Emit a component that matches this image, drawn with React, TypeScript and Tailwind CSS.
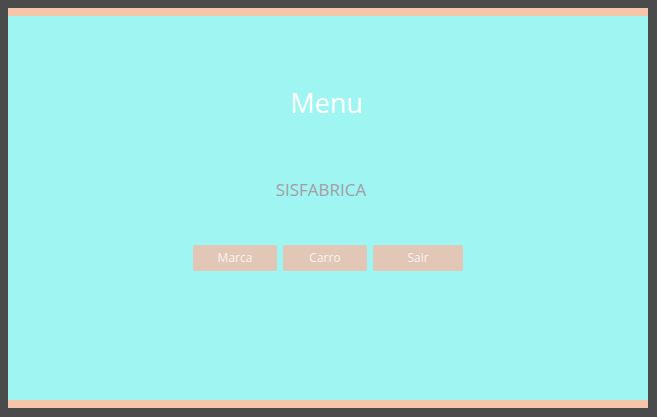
export default function App() {
  return (
    <div className="w-[657px] h-[417px] bg-[#4b4b4b] pl-[8px] pt-[8px]" style={{ fontFamily: '"Open Sans", "Noto Sans", sans-serif' }}>
      <div className="w-[640px] h-[400px] flex flex-col">
        <div className="h-[8px] bg-[#f6c6ab]" />
        <div className="flex-1 bg-[#9ef5f1] flex flex-col items-center">
          <h1 className="mt-[70px] text-[27px] leading-[34px] text-white -ml-[3px]">Menu</h1>
          <div className="mt-[58px] text-[17px] leading-[24px] text-[#a89ca6] -ml-[14px]">SISFABRICA</div>
          <div className="mt-[43px] flex gap-[6px]">
            <button className="w-[84px] h-[26px] rounded-[2px] bg-[#e2c6b6] text-[#f8f4f2] text-[12px]">Marca</button>
            <button className="w-[84px] h-[26px] rounded-[2px] bg-[#e2c6b6] text-[#f8f4f2] text-[12px]">Carro</button>
            <button className="w-[90px] h-[26px] rounded-[2px] bg-[#e2c6b6] text-[#f8f4f2] text-[12px]">Sair</button>
          </div>
        </div>
        <div className="h-[8px] bg-[#f6c6ab]" />
      </div>
    </div>
  );
}
